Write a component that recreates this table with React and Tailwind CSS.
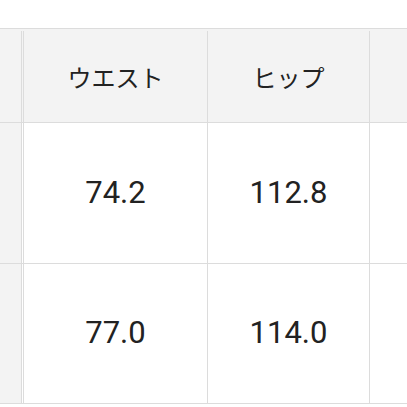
const HEAD = ['ウエスト', 'ヒップ']
const ROWS = [
  ['74.2', '112.8'],
  ['77.0', '114.0'],
]

function Row({ cells, head, className }) {
  const text = head
    ? "text-[24px] font-['Noto_Sans_CJK_JP',sans-serif]"
    : "text-[31px] font-['Roboto','Noto_Sans',sans-serif]"
  return (
    <div className={`grid grid-cols-[22px_186px_162px_1fr] border-b border-[#dcdcdc] ${head ? 'bg-[#f3f3f3]' : 'bg-white'} ${className}`}>
      <div className="bg-[#f3f3f3] border-r border-[#dcdcdc]" />
      <div className={`ml-px border-l border-r border-[#dcdcdc] flex items-center justify-center text-[#222] ${text}`}>
        {cells[0]}
      </div>
      <div className={`border-r border-[#dcdcdc] flex items-center justify-center text-[#222] ${text}`}>
        {cells[1]}
      </div>
      <div />
    </div>
  )
}

export default function App() {
  return (
    <div className="w-[407px] h-[407px] bg-white pt-[28px] overflow-hidden">
      <div className="border-t border-[#dcdcdc]">
        <Row cells={HEAD} head className="h-[94px] pt-[2px]" />
        <Row cells={ROWS[0]} className="h-[141px]" />
        <Row cells={ROWS[1]} className="h-[140px]" />
      </div>
    </div>
  )
}
